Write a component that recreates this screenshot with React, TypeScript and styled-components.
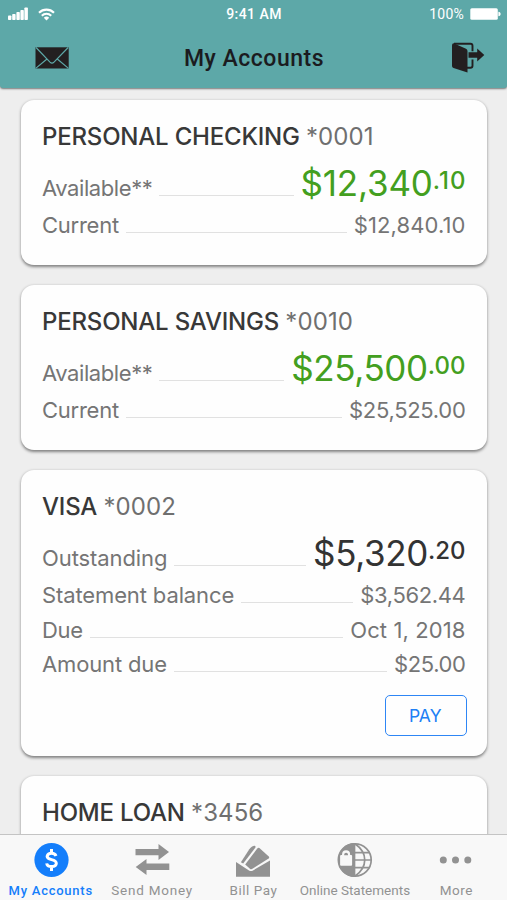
import React from "react";
import styled, { createGlobalStyle } from "styled-components";

const GlobalStyle = createGlobalStyle`
  * { box-sizing: border-box; }
  html, body { margin: 0; padding: 0; background: #eeeeee; overflow: hidden; }
  svg { display: block; }
`;

const Screen = styled.div`
  display: flex;
  flex-direction: column;
  width: 507px;
  height: 900px;
  overflow: hidden;
  background: #eeeeee;
  font-family: Inter, "Liberation Sans", sans-serif;
`;

const Header = styled.header`
  flex: none;
  height: 88px;
  background: #5da8a8;
  border-radius: 0 0 3px 3px;
  box-shadow: 0 1px 2px rgba(0, 0, 0, 0.5);
  font-family: Roboto, sans-serif;
`;

const StatusBar = styled.div`
  display: grid;
  grid-template-columns: minmax(0, 1fr) auto minmax(0, 1fr);
  align-items: center;
  height: 28px;
  padding: 0 7px 0 8px;
  color: #fff;
`;

const Signals = styled.div`
  display: flex;
  align-items: center;
  gap: 10px;
`;

const Clock = styled.div`
  font-size: 14px;
  font-weight: 500;
  letter-spacing: 0.45px;
`;

const Battery = styled.div`
  display: flex;
  justify-content: flex-end;
  align-items: center;
  gap: 6px;
  margin-right: -1px;
  font-size: 14px;
  letter-spacing: 0.25px;
`;

const NavBar = styled.div`
  display: grid;
  grid-template-columns: 1fr auto 1fr;
  align-items: center;
  height: 60px;
  padding: 0 22px 0 35px;
`;

const NavTitle = styled.h1`
  margin: 0 0 0 -12px;
  color: #1b1b20;
  font-size: 23px;
  font-weight: 500;
  letter-spacing: 0.5px;
`;

const NavEnd = styled.div`
  display: flex;
  justify-content: flex-end;
`;

const List = styled.main`
  flex: 1;
  min-height: 0;
  overflow: hidden;
  display: flex;
  flex-direction: column;
  gap: 20.5px;
  padding: 12px 20.5px 0 21px;
`;

const Card = styled.section<{ $height: number }>`
  flex: none;
  display: flex;
  flex-direction: column;
  height: ${(p) => p.$height}px;
  padding: 22px 21px 0;
  border-radius: 13px;
  background: #fefefe;
  box-shadow: 0 1.5px 3px rgba(0, 0, 0, 0.45);
`;

const CardTitle = styled.h2`
  margin: 0 0 6px;
  height: 30px;
  line-height: 30px;
  white-space: nowrap;
  color: #383838;
  font-size: 24px;
  font-weight: 450;
  letter-spacing: -0.2px;
`;

const AccountNumber = styled.span`
  color: #6f6f6f;
  font-weight: 400;
  letter-spacing: 0.1px;
`;

const Row = styled.div<{ $main?: boolean }>`
  display: flex;
  align-items: baseline;
  height: ${(p) => (p.$main ? 50 : 34.5)}px;
  line-height: ${(p) => (p.$main ? 50 : 34.5)}px;
  white-space: nowrap;
`;

const Label = styled.span<{ $spacing: number }>`
  line-height: 30px;
  color: #757575;
  font-size: 22px;
  letter-spacing: ${(p) => p.$spacing}px;
`;

const Leader = styled.span`
  flex: 1;
  height: 1px;
  margin: 0 7px;
  background: #e1e1e1;
`;

const Value = styled.span<{ $spacing: number }>`
  color: #757575;
  font-size: 22px;
  letter-spacing: ${(p) => p.$spacing}px;
`;

const Amount = styled.span<{ $tone: string; $spacing: number }>`
  color: ${(p) => p.$tone};
  font-size: 35px;
  letter-spacing: ${(p) => p.$spacing}px;
`;

const Cents = styled.span<{ $spacing: number }>`
  font-size: 24px;
  font-weight: 500;
  line-height: 0;
  letter-spacing: ${(p) => p.$spacing}px;
  margin-right: ${(p) => -p.$spacing}px;
  vertical-align: 7.4px;
`;

const PayButton = styled.button`
  align-self: flex-end;
  margin: 13.5px -1px 0 0;
  width: 81.5px;
  height: 41px;
  padding: 0 1px 0 0;
  border: 1.5px solid #2e86f5;
  border-radius: 5px;
  background: transparent;
  color: #2080f5;
  font: 400 17.5px Inter, sans-serif;
`;

const TabBar = styled.nav`
  flex: none;
  display: grid;
  grid-template-columns: repeat(5, minmax(0, 1fr));
  height: 66px;
  border-top: 1px solid #c4c4c4;
  background: #f8f8f8;
  font-family: Roboto, sans-serif;
`;

const Tab = styled.a<{ $active?: boolean; $spacing: number }>`
  display: flex;
  flex-direction: column;
  align-items: center;
  gap: ${(p) => (p.$active ? 5 : 4)}px;
  padding-top: 7px;
  color: ${(p) => (p.$active ? "#147efb" : "#929292")};
  font-size: ${(p) => (p.$active ? 13 : 13.5)}px;
  font-weight: ${(p) => (p.$active ? 500 : 400)};
  line-height: 16px;
  letter-spacing: ${(p) => p.$spacing}px;
  white-space: nowrap;
`;

const SignalIcon = () => (
  <svg width="20" height="14" viewBox="0 0 20 14" fill="#fff">
    <rect x="0" y="8.5" width="3.4" height="4.5" rx="0.8" />
    <rect x="4.2" y="7" width="3.4" height="6" rx="0.8" />
    <rect x="8.4" y="5" width="3.4" height="8" rx="0.8" />
    <rect x="12.4" y="3" width="3.4" height="10" rx="0.8" />
    <rect x="16.4" y="0.5" width="3.5" height="12.5" rx="0.8" />
  </svg>
);

const WifiIcon = () => (
  <svg width="17" height="13" viewBox="0 0 17 13" fill="none" stroke="#fff" strokeWidth="2.1">
    <path d="M1 4.7a10.7 10.7 0 0 1 15 0" />
    <path d="M3.8 7.7a6.8 6.8 0 0 1 9.4 0" />
    <path d="M5.8 9.8a3.8 3.8 0 0 1 5.4 0L8.5 12.5Z" fill="#fff" stroke="none" />
  </svg>
);

const BatteryIcon = () => (
  <svg width="31" height="12" viewBox="0 0 31 12" fill="#fff">
    <rect x="0.3" y="0.3" width="27.5" height="11.4" rx="1.5" />
    <path d="M28.4 3.8c3 .3 3 4.1 0 4.4Z" />
  </svg>
);

const MailIcon = () => (
  <svg width="34" height="22" viewBox="0 0 34 22" fill="#231f20">
    <rect x="0.5" y="0.3" width="33.2" height="21.2" />
    <g fill="none" stroke="#5da8a8" strokeWidth="1.2">
      <path d="M1 .5 15 15.2q2 2 4 0L33.2.5" />
      <path d="M.7 21.4 12 12M33.5 21.4 22.3 12" />
    </g>
  </svg>
);

const ExitIcon = () => (
  <svg width="34" height="32" viewBox="0 0 34 32" fill="#231f20">
    <path d="M3 1.7h16.5q2 0 2 2v5.5M21.5 17.5v6.2q0 2-2 2H16" fill="none" stroke="#231f20" strokeWidth="1.9" />
    <path d="M1 3.3q0-2.2 2.2-1.9L15 6.7q1.5.8 1.5 2.3v21.5L2.5 26Q1 25.3 1 24Z" />
    <path d="M17.5 10.3h8.7V6.6L33.3 13 26.2 19.5v-3.8h-8.7Z" />
  </svg>
);

const DollarIcon = () => (
  <svg width="36" height="36" viewBox="0 0 36 36">
    <circle cx="18.5" cy="18" r="17.1" fill="#147efb" />
    <path
      d="M23 13.9Q22.1 11.3 18.5 11.3T14.1 14.3C14.1 19 23.3 16.2 23.3 21.3Q23.3 24.6 18.7 24.6T13.7 21.4M18.5 7v4.6M18.5 24.2V29"
      fill="none"
      stroke="#fff"
      strokeWidth="3"
    />
  </svg>
);

const TransferIcon = () => (
  <svg width="36" height="36" viewBox="0 0 36 36" fill="#929292">
    <path d="M1.5 6.9h23V2.1L35 10l-10.5 7.9v-4.6h-23Z" />
    <path d="M35.3 28.1H12.5v5L1.7 25l10.8-7.9v4.5h22.8Z" />
  </svg>
);

const BillIcon = () => (
  <svg width="36" height="36" viewBox="0 0 36 36" fill="#929292">
    <path d="M1 34.8V20l13 8.4q2 1 4 0L35 18.4v16.4Z" />
    <path d="M5.9 20.2 14.3 7.3q1.2-1.8 2.8-2.7l2-.9q2-.3 1.2 2L8.2 21.5Z" />
    <path d="m10.2 22.6 12.1-16.2q1-.9 2.1-.3l9.4 8.4q.9 1-.2 2L17 27.1q-1.1.4-1.8-.2Z" />
  </svg>
);

const GlobeLockIcon = () => (
  <svg width="36" height="36" viewBox="0 0 36 36">
    <path d="M17.5 1a17 17 0 0 0 0 34Z" fill="#929292" />
    <g fill="none" stroke="#929292" strokeWidth="1.7">
      <circle cx="18" cy="18" r="16.2" />
      <path d="M18 1.8C31 11 31 25 18 34.2M17.5 10.6h14.8M17.5 18H34M17.5 25.6h14.8M17.5 2v32" />
    </g>
    <rect x="3.1" y="13.1" width="12" height="10.6" rx="1" fill="#f8f8f8" />
    <path d="M5.1 13.4v-1.1a4 4 0 0 1 8 0v1.1" fill="#f8f8f8" />
    <path d="M7.2 13.2v-.6a1.9 1.9 0 0 1 3.8 0v.6Z" fill="#929292" />
  </svg>
);

const MoreIcon = () => (
  <svg width="36" height="36" viewBox="0 0 36 36" fill="#929292">
    <circle cx="5.3" cy="18" r="3.5" />
    <circle cx="17.5" cy="18" r="3.5" />
    <circle cx="29.8" cy="18" r="3.5" />
  </svg>
);

type Line = { label: string; ls: number; value: string; vs: number };
type Account = {
  name: string;
  number: string;
  height: number;
  tone?: string;
  main?: { label: string; ls: number; dollars: string; cents: string; vs: number; cs: number };
  lines: Line[];
  payable?: boolean;
};

const accounts: Account[] = [
  {
    name: "PERSONAL CHECKING", number: "*0001", height: 164.5, tone: "#439f20",
    main: { label: "Available**", ls: -0.42, dollars: "$12,340", cents: ".10", vs: -0.2, cs: 1.1 },
    lines: [{ label: "Current", ls: -0.25, value: "$12,840.10", vs: 0.1 }],
  },
  {
    name: "PERSONAL SAVINGS", number: "*0010", height: 164.5, tone: "#439f20",
    main: { label: "Available**", ls: -0.42, dollars: "$25,500", cents: ".00", vs: -0.4, cs: 0.1 },
    lines: [{ label: "Current", ls: -0.25, value: "$25,525.00", vs: -0.3 }],
  },
  {
    name: "VISA", number: "*0002", height: 285.5, tone: "#333333", payable: true,
    main: { label: "Outstanding", ls: -0.1, dollars: "$5,320", cents: ".20", vs: -0.35, cs: 0 },
    lines: [
      { label: "Statement balance", ls: -0.12, value: "$3,562.44", vs: -0.35 },
      { label: "Due", ls: -0.3, value: "Oct 1, 2018", vs: 0.1 },
      { label: "Amount due", ls: -0.15, value: "$25.00", vs: -0.4 },
    ],
  },
  { name: "HOME LOAN", number: "*3456", height: 165, lines: [] },
];

const AccountCard = ({ account }: { account: Account }) => (
  <Card $height={account.height}>
    <CardTitle>
      {account.name} <AccountNumber>{account.number}</AccountNumber>
    </CardTitle>
    {account.main && (
      <Row $main>
        <Label $spacing={account.main.ls}>{account.main.label}</Label>
        <Leader />
        <Amount $tone={account.tone || "#333333"} $spacing={account.main.vs}>
          {account.main.dollars}
          <Cents $spacing={account.main.cs}>{account.main.cents}</Cents>
        </Amount>
      </Row>
    )}
    {account.lines.map((line) => (
      <Row key={line.label}>
        <Label $spacing={line.ls}>{line.label}</Label>
        <Leader />
        <Value $spacing={line.vs}>{line.value}</Value>
      </Row>
    ))}
    {account.payable && <PayButton>PAY</PayButton>}
  </Card>
);

export default function App() {
  return (
    <>
      <GlobalStyle />
      <Screen>
        <Header>
          <StatusBar>
            <Signals>
              <SignalIcon />
              <WifiIcon />
            </Signals>
            <Clock>9:41 AM</Clock>
            <Battery>
              100%
              <BatteryIcon />
            </Battery>
          </StatusBar>
          <NavBar>
            <MailIcon />
            <NavTitle>My Accounts</NavTitle>
            <NavEnd>
              <ExitIcon />
            </NavEnd>
          </NavBar>
        </Header>
        <List>
          {accounts.map((account) => (
            <AccountCard key={account.name} account={account} />
          ))}
        </List>
        <TabBar>
          <Tab $active $spacing={0.75}>
            <DollarIcon />
            My Accounts
          </Tab>
          <Tab $spacing={0.75}>
            <TransferIcon />
            Send Money
          </Tab>
          <Tab $spacing={0.55}>
            <BillIcon />
            Bill Pay
          </Tab>
          <Tab $spacing={0}>
            <GlobeLockIcon />
            Online Statements
          </Tab>
          <Tab $spacing={0.5}>
            <MoreIcon />
            More
          </Tab>
        </TabBar>
      </Screen>
    </>
  );
}
